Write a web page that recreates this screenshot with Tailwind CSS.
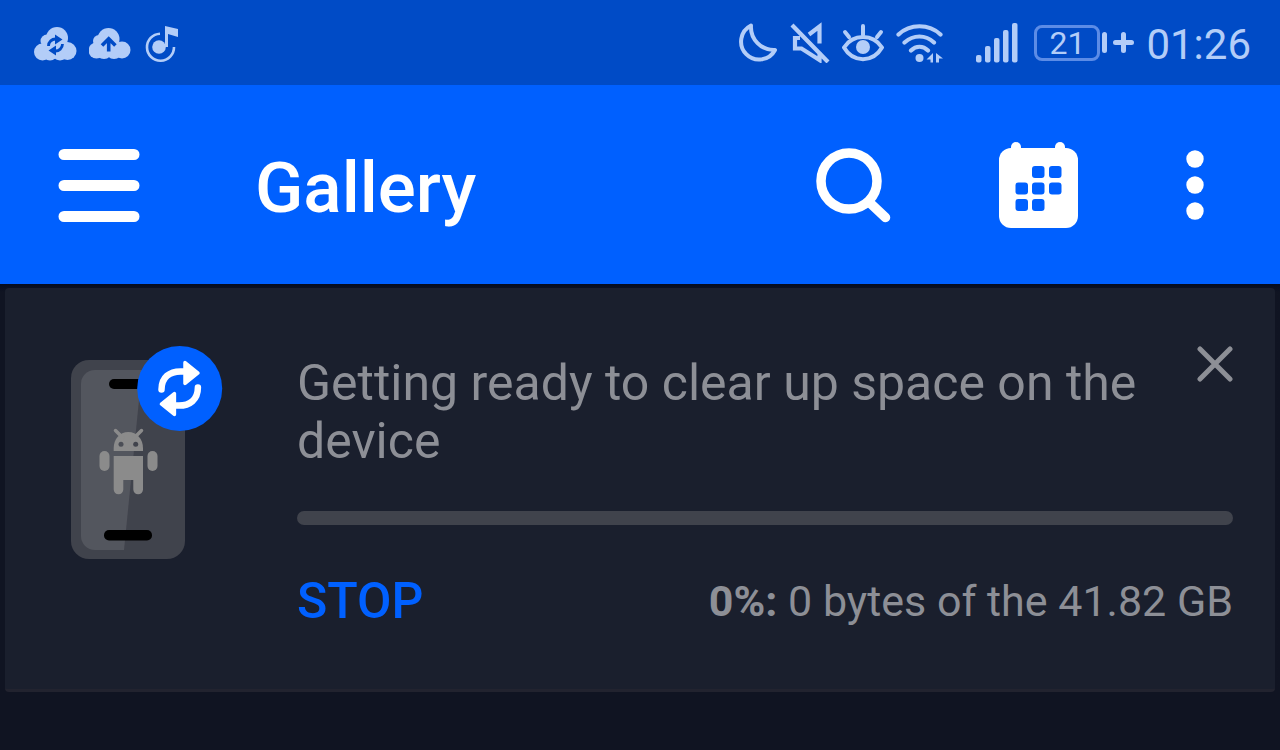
<!DOCTYPE html>
<html lang="en">

<head>
    <meta charset="UTF-8">
    <meta name="viewport" content="width=device-width, initial-scale=1.0">
    <title>Gallery</title>
    <script src="https://cdn.jsdelivr.net/npm/@tailwindcss/browser@4"></script>
</head>

<body class="min-h-screen bg-[#101422] font-['Roboto',sans-serif]">
    <!-- Status bar -->
    <div class="flex h-[85px] items-center justify-between bg-[#004bc6] pl-[33px] pr-[29px] text-[#b3cdf8]">
        <div class="flex items-center gap-3">
            <!-- Cloud sync -->
            <svg class="h-[41px] w-11" viewBox="0 0 44 41" fill="currentColor">
                <circle cx="24" cy="16" r="11" />
                <circle cx="14" cy="19" r="6.500" />
                <circle cx="9.500" cy="30" r="8.500" />
                <circle cx="34.500" cy="29" r="9" />
                <circle cx="17" cy="31" r="7.500" />
                <circle cx="27" cy="30" r="8.500" />
                <g stroke="#004bc6" stroke-width="2.800" fill="none">
                    <path d="M15.500 24a7 7 0 0 1 7.500-7" />
                    <path d="M29.500 22a7 7 0 0 1-7.500 7" />
                </g>
                <path fill="#004bc6" d="M22 12.500l7.500 5-7.500 5zM23 23.500v10L15.500 28.500z" />
            </svg>
            <!-- Cloud upload -->
            <svg class="h-[41px] w-11" viewBox="1 0 44 41" fill="currentColor">
                <circle cx="20.500" cy="17" r="11" />
                <circle cx="11" cy="19" r="6" />
                <circle cx="8.500" cy="28.500" r="8" />
                <circle cx="34" cy="28" r="8.500" />
                <circle cx="16" cy="29" r="8" />
                <circle cx="26" cy="29" r="8" />
                <path stroke="#004bc6" stroke-width="3.600" fill="none" d="M20.700 29.500V17M14 23.500l6.700-6.700 6.700 6.700" />
            </svg>
            <!-- Music -->
            <svg class="h-[41px] w-9" viewBox="0 0 36 41" fill="currentColor">
                <circle cx="14" cy="25" r="6.800" />
                <path d="M20 4l13 3v8L23 12v13h-3z" />
                <path fill="none" stroke="currentColor" stroke-width="2.600" d="M15 11.700A13.500 13.500 0 1 0 29 25" />
            </svg>
        </div>

        <div class="flex items-center gap-3">
            <!-- Moon -->
            <svg class="h-[41px] w-10" viewBox="0 0 40 41" fill="none" stroke="currentColor" stroke-width="4"
                stroke-linejoin="round">
                <path d="M13 3.500A18 18 0 1 0 37 28A23 23 0 0 1 13 3.500z" />
            </svg>
            <!-- Muted -->
            <svg class="h-[41px] w-10" viewBox="0 0 40 41" fill="none" stroke="currentColor" stroke-width="4.200">
                <path d="M2 3l36 37M10 16H5v10.500h6.500L29.500 38v-8M19 12.500L29.500 4.500v17" />
            </svg>
            <!-- Eye -->
            <svg class="h-[41px] w-[42px]" viewBox="0 0 42 41" fill="none" stroke="currentColor" stroke-width="4"
                stroke-linecap="round">
                <path d="M2 25.500C11 11.500 31 11.500 40 25.500C31 41 11 41 2 25.500z" stroke-linejoin="round" />
                <path d="M21 4v9M3 10l4 5M39 10l-4 5" />
                <circle cx="21" cy="25" r="7" fill="currentColor" stroke="none" />
            </svg>
            <!-- Wi-Fi -->
            <svg class="h-[41px] w-12" viewBox="0 0 48 41" fill="none" stroke="currentColor" stroke-width="4.200"
                stroke-linecap="round">
                <path d="M2.500 12.500C14 1.500 33 1.500 44.500 12.500M8.500 20.500c9-8 21-8 29.500 0M15 28.500c5-5 12-5 17 0" />
                <circle cx="23.500" cy="36" r="4" fill="currentColor" stroke="none" />
                <path fill="currentColor" stroke="none" d="M30.500 37.500L37 31v9.500h-2.500v-3zM40 31l7 5.500h-4v4h-3z" />
            </svg>
            <!-- Signal -->
            <svg class="ml-5 h-[41px] w-[42px]" viewBox="0 0 42 41" fill="currentColor">
                <rect x="0" y="33" width="5.500" height="7.500" rx="2" />
                <rect x="9" y="24" width="5.500" height="16.500" rx="2" />
                <rect x="18" y="16" width="5.500" height="24.500" rx="2" />
                <rect x="27" y="8" width="5.500" height="32.500" rx="2" />
                <rect x="36" y="1" width="5.500" height="39.500" rx="2" />
            </svg>
            <!-- Battery -->
            <div class="ml-1 flex items-center gap-[2px]">
                <span
                    class="flex h-9 w-[66px] items-center justify-center rounded-lg border-3 border-[#5c8ce6] text-[32px] leading-none">21</span>
                <span class="h-[21px] w-[5px] rounded-sm bg-[#b3cdf8]"></span>
                <svg class="ml-1 h-[21px] w-[21px]" viewBox="0 0 21 21" stroke="currentColor" stroke-width="5"
                    stroke-linecap="round">
                    <path d="M2.500 10.500h16M10.500 2.500v16" />
                </svg>
            </div>
            <span class="pt-1 text-[42px] leading-none">01:26</span>
        </div>
    </div>

    <!-- App bar -->
    <header class="flex h-[199px] items-center bg-[#0060ff] pl-[58px] pr-[76px] pt-[2px] text-white">
        <button type="button" aria-label="Menu">
            <svg class="h-[75px] w-[82px]" viewBox="0 0 82 75" stroke="currentColor" stroke-width="11"
                stroke-linecap="round">
                <path d="M6 6.500h70M6 37.500h70M6 68.500h70" />
            </svg>
        </button>
        <h1 class="ml-[115px] flex-1 pt-1 text-[71px] font-medium leading-none">Gallery</h1>
        <button type="button" aria-label="Search">
            <svg class="h-[75px] w-[75px]" viewBox="0 0 75 75" fill="none" stroke="currentColor" stroke-width="9.500">
                <circle cx="33" cy="33" r="28" />
                <path d="M53 54l16.500 15.500" stroke-linecap="round" />
            </svg>
        </button>
        <button type="button" aria-label="Calendar" class="ml-[108px]">
            <svg class="h-[87px] w-[79px]" viewBox="0 0 79 87" fill="currentColor">
                <rect x="0" y="6" width="79" height="80" rx="12" />
                <rect x="12" y="0" width="10" height="16" rx="5" />
                <rect x="56" y="0" width="10" height="16" rx="5" />
                <g fill="#0060ff">
                    <rect x="33" y="24" width="12.500" height="12" rx="3" />
                    <rect x="50" y="24" width="12.500" height="12" rx="3" />
                    <rect x="16.500" y="40.500" width="12.500" height="12" rx="3" />
                    <rect x="33" y="40.500" width="12.500" height="12" rx="3" />
                    <rect x="50" y="40.500" width="12.500" height="12" rx="3" />
                    <rect x="16.500" y="57" width="12.500" height="12" rx="3" />
                    <rect x="33" y="57" width="12.500" height="12" rx="3" />
                </g>
            </svg>
        </button>
        <button type="button" aria-label="More options" class="ml-[108px]">
            <svg class="h-[71px] w-[18px]" viewBox="0 0 18 71" fill="currentColor">
                <circle cx="9" cy="9" r="8.700" />
                <circle cx="9" cy="35" r="8.700" />
                <circle cx="9" cy="61" r="8.700" />
            </svg>
        </button>
    </header>

    <!-- Clean-up card -->
    <main class="bg-linear-to-b from-[#060c1e] to-[#101422] to-[8px] px-[5px] pt-1">
        <section
            class="flex items-start gap-[74px] rounded-sm border-b-3 border-[#22232f] bg-[#1a1f2d] pb-[59px] pl-[66px] pr-[42px] pt-[58px] text-[#8d8f96]">
            <!-- Phone with sync badge -->
            <svg class="h-[214px] w-[152px] shrink-0" viewBox="0 0 152 214">
                <rect x="0" y="14" width="114" height="199" rx="18" fill="#40434c" />
                <path d="M24 24H71L53 204H24a14 14 0 0 1-14-14V38a14 14 0 0 1 14-14z" fill="#53565e" />
                <rect x="38" y="33" width="40" height="10" rx="5" fill="#000" />
                <rect x="33" y="184" width="48" height="10.500" rx="5" fill="#000" />
                <g fill="#8b8b8b">
                    <path d="M42.700 105v-3c0-9 6-16 14.600-16S72 93 72 102v3z" />
                    <path d="M44.500 84.500l7 7M70.500 84.500l-7 7" stroke="#8b8b8b" stroke-width="3.500" stroke-linecap="round" />
                    <path d="M42.700 110H72v33.500a4.800 4.800 0 0 1-9.700 0V134h-10v9.500a4.800 4.800 0 0 1-9.600 0z" />
                    <rect x="28.500" y="105" width="10" height="20" rx="5" />
                    <rect x="76.500" y="105" width="10" height="20" rx="5" />
                </g>
                <circle cx="50" cy="98.300" r="2.500" fill="#4b4e56" />
                <circle cx="64.700" cy="98.300" r="2.500" fill="#40434c" />
                <circle cx="108.700" cy="42.500" r="42.500" fill="#0060ff" />
                <g id="arrow">
                    <path d="M90.500 43.500C90.500 32 98 24.500 112 25.500" fill="none" stroke="#fff" stroke-width="6.500"
                        stroke-linecap="round" />
                    <path d="M114 16.500L127 27l-13 10.500z" fill="#fff" stroke="#fff" stroke-width="3.500"
                        stroke-linejoin="round" />
                </g>
                <use href="#arrow" transform="rotate(180 108.700 42.500)" />
            </svg>

            <div class="flex-1">
                <div class="flex items-start justify-between">
                    <p class="pt-2 text-[50px] leading-[58px]">Getting ready to clear up space on the device</p>
                    <button type="button" aria-label="Close" class="shrink-0">
                        <svg class="h-9 w-9" viewBox="0 0 36 36" stroke="currentColor" stroke-width="5"
                            stroke-linecap="round">
                            <path d="M3 3l30 30M33 3L3 33" />
                        </svg>
                    </button>
                </div>
                <progress value="0" max="100" aria-label="Clean-up progress"
                    class="mt-[41px] block h-[14px] w-full appearance-none overflow-hidden rounded-full bg-[#40434c] [&::-webkit-progress-bar]:bg-[#40434c] [&::-webkit-progress-value]:bg-[#0060ff]"></progress>
                <div class="mt-[47px] flex items-center justify-between leading-[58px]">
                    <button type="button" class="text-[50px] font-medium text-[#0060ff]">STOP</button>
                    <p class="text-[43px]"><b class="font-bold">0%:</b> 0 bytes of the 41.82 GB</p>
                </div>
            </div>
        </section>
    </main>
</body>

</html>
